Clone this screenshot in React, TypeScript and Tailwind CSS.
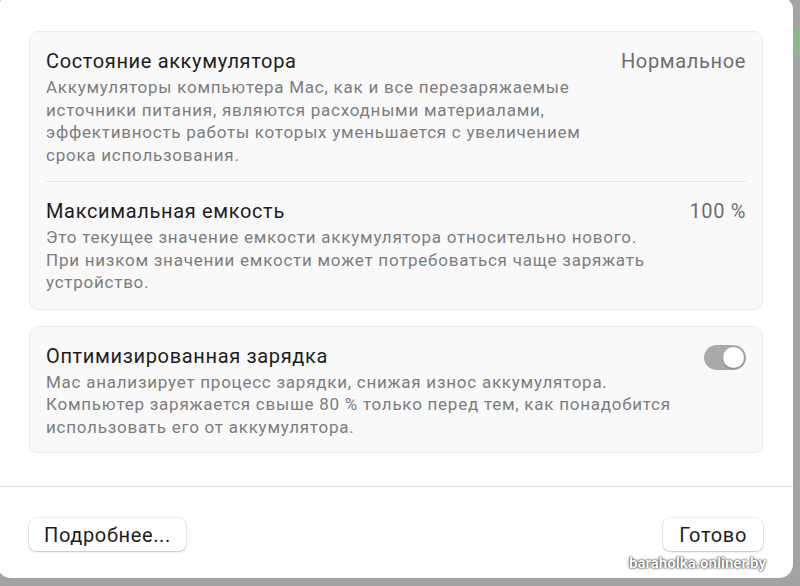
import React from 'react';

const font = { fontFamily: 'Roboto, "Noto Sans", sans-serif' };

const Toggle = () => (
  <div className="mt-[4px] w-[42px] h-[25px] rounded-full bg-[#a9a9a9] flex items-center justify-end pr-[2px] shrink-0">
    <div className="w-[21px] h-[21px] rounded-full bg-white shadow-[0_1px_2px_rgba(0,0,0,0.25)]" />
  </div>
);

const Row = ({ title, value, lines }: { title: string; value?: React.ReactNode; lines: string[] }) => (
  <div className="flex flex-col">
    <div className="flex items-center justify-between h-[26px]">
      <span className="text-[20px] tracking-[0.65px] text-[#1d1d1d]">{title}</span>
      {value}
    </div>
    <div className="mt-[2px] text-[17px] tracking-[0.75px] leading-[22.5px] text-[#7d7d7d]">
      {lines.map((l) => (
        <div key={l}>{l}</div>
      ))}
    </div>
  </div>
);

const Value = ({ children }: { children: React.ReactNode }) => (
  <span className="text-[20px] tracking-[0.65px] text-[#6e6e6e]">{children}</span>
);

export default function App() {
  return (
    <div className="relative w-[800px] h-[586px] overflow-hidden bg-[#a3a3a3]" style={font}>
      <div className="absolute right-0 top-[27px] w-[8px] h-[28px] bg-[#8bb88a]" />
      <div className="relative ml-[-3px] mt-[-4px] w-[796px] h-[582px] bg-white rounded-[14px] flex flex-col">
        <div className="flex flex-col gap-[16px] pt-[35px] pl-[32px] pr-[30px]">
          <div className="w-[734px] rounded-[9px] bg-[#f9f9f9] border border-[#ececec] px-[16px] pt-[16px] pb-[15px] flex flex-col">
            <Row
              title="Состояние аккумулятора"
              value={<Value>Нормальное</Value>}
              lines={[
                'Аккумуляторы компьютера Mac, как и все перезаряжаемые',
                'источники питания, являются расходными материалами,',
                'эффективность работы которых уменьшается с увеличением',
                'срока использования.',
              ]}
            />
            <div className="h-px bg-[#e4e4e4] mt-[15px] mb-[16px]" />
            <Row
              title="Максимальная емкость"
              value={<Value>100 %</Value>}
              lines={[
                'Это текущее значение емкости аккумулятора относительно нового.',
                'При низком значении емкости может потребоваться чаще заряжать',
                'устройство.',
              ]}
            />
          </div>
          <div className="w-[734px] rounded-[9px] bg-[#f9f9f9] border border-[#ececec] px-[16px] pt-[16px] pb-[14px] flex flex-col">
            <Row
              title="Оптимизированная зарядка"
              value={<Toggle />}
              lines={[
                'Mac анализирует процесс зарядки, снижая износ аккумулятора.',
                'Компьютер заряжается свыше 80 % только перед тем, как понадобится',
                'использовать его от аккумулятора.',
              ]}
            />
          </div>
        </div>
        <div className="mt-auto border-t border-[#e2e2e2] h-[92px] flex items-start justify-between pl-[32px] pr-[30px] pt-[31px]">
          <button className="h-[33px] px-[15px] rounded-[7px] bg-white text-[20px] tracking-[0.65px] text-[#1d1d1d] shadow-[0_0_0_0.5px_rgba(0,0,0,0.12),0_1px_2px_rgba(0,0,0,0.2)]">
            Подробнее...
          </button>
          <div className="relative">
            <button className="h-[33px] px-[16px] rounded-[7px] bg-white text-[20px] tracking-[0.65px] text-[#1d1d1d] shadow-[0_0_0_0.5px_rgba(0,0,0,0.12),0_1px_2px_rgba(0,0,0,0.2)]">
              Готово
            </button>
            <span className="absolute right-[-3px] top-[34px] whitespace-nowrap text-[15px] font-bold text-white [text-shadow:0_0_3px_rgba(0,0,0,0.8),0_0_1px_rgba(0,0,0,0.9)]">
              baraholka.onliner.by
            </span>
          </div>
        </div>
      </div>
    </div>
  );
}
